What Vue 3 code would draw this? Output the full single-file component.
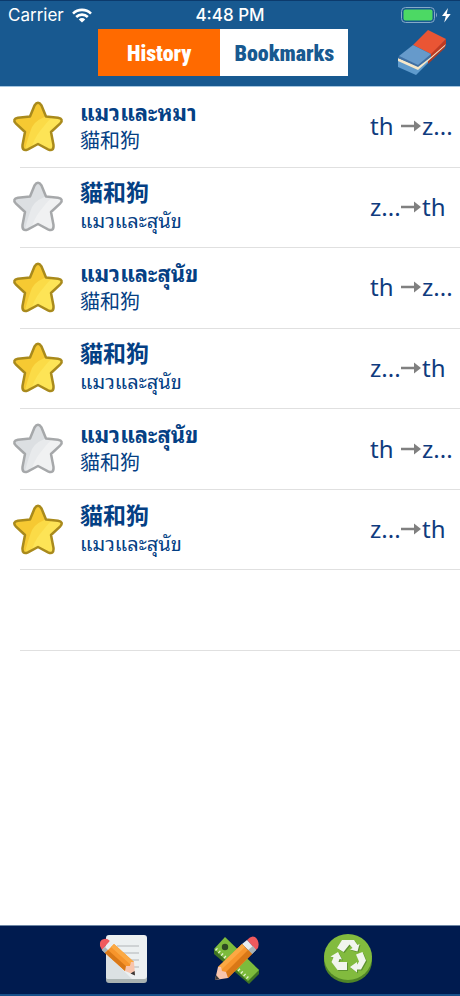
<template>
    <div class="app">
        <header class="top">
            <div class="status">
                <div class="carrier">
                    <span>Carrier</span>
                    <svg width="20" height="15" viewBox="0 0 20 15" aria-hidden="true">
                        <g fill="none" stroke="#fff" stroke-width="2.6">
                            <path d="M1 5.6a12.8 12.8 0 0 1 18 0" />
                            <path d="M4.2 9a8.3 8.3 0 0 1 11.6 0" />
                        </g>
                        <path d="M10 14.6 6.8 11.4a4.6 4.6 0 0 1 6.4 0z" fill="#fff" />
                    </svg>
                </div>
                <span class="time">4:48 PM</span>
                <svg class="battery" width="52" height="18" viewBox="0 0 52 18" aria-hidden="true">
                    <rect x="1.5" y="1.5" width="33" height="15" rx="4" fill="none" stroke="#86a9c8" />
                    <rect x="3.5" y="3.5" width="29" height="11" rx="2" fill="#4cd964" />
                    <path d="M36 6.5q2 2.5 0 5z" fill="#86a9c8" />
                    <path d="M48 2 42 10h3.8l-1.6 6.5 6.5-8.4h-4z" fill="#fff" />
                </svg>
            </div>
            <div class="toolbar">
                <div class="tabs">
                    <button type="button" class="tab" :class="{ active: tab === 'history' }"
                        @click="tab = 'history'">History</button>
                    <button type="button" class="tab" :class="{ active: tab === 'bookmarks' }"
                        @click="tab = 'bookmarks'">Bookmarks</button>
                </div>
                <button type="button" class="icon-button" aria-label="Clear history" @click="entries = []">
                    <svg width="52" height="48" viewBox="0 0 52 48">
                        <path d="M1 31 21 39 31 30 31 34 19 46 1 38z" fill="#5f9bcd" />
                        <path d="M31 30 49 15 48 19 31 35z" fill="#a83b28" />
                        <path d="M1 29 21 37 49 14 48 17 21 41 1 32z" fill="#f6e8c9" />
                        <path d="M2 27 21 35 34 24 34 28 21 38 1 29z" fill="#3f6fa3" />
                        <path d="M34 24 49 10 49 15 34 28z" fill="#bf3a22" />
                        <path d="M16 16 31 1 49 10 34 25z" fill="#ea5534" />
                        <path d="M16 16 34 25 21 36 2 27z" fill="#669acb" />
                    </svg>
                </button>
            </div>
        </header>

        <main class="content">
            <ul class="entries">
                <li v-for="(entry, i) in entries" :key="i" class="entry">
                    <button type="button" class="star" :class="{ on: entry.starred }" :aria-pressed="entry.starred"
                        aria-label="Bookmark" @click="entry.starred = !entry.starred">
                        <svg width="52" height="52" viewBox="0 0 52 52">
                            <defs>
                                <clipPath :id="'star' + i">
                                    <path :d="starPath" />
                                </clipPath>
                            </defs>
                            <g :clip-path="`url(#star${i})`">
                                <path class="shade" d="M0 0h52v52H0z" />
                                <path class="light" d="M52 14H38Q24 18 20 26 16 36 12 52H52z" />
                                <path class="glow" d="M52 14H42Q34 22 28 30 21 39 18 52H52z" />
                            </g>
                            <path class="outline" :d="starPath" />
                        </svg>
                    </button>
                    <div class="words">
                        <strong class="source" :class="{ thai: entry.from === 'th' }">{{ entry.source }}</strong>
                        <span class="target">{{ entry.target }}</span>
                    </div>
                    <div class="direction">
                        <span>{{ entry.from }}</span>
                        <svg width="20" height="14" viewBox="0 0 20 14" aria-hidden="true">
                            <path d="M0 5.8h13V1.5l7 5.5-7 5.5V8.2H0z" fill="#808080" />
                        </svg>
                        <span>{{ entry.to }}</span>
                    </div>
                </li>
                <li class="entry"></li>
            </ul>
        </main>

        <nav class="bottom">
            <button type="button" class="icon-button" aria-label="Write">
                <svg width="50" height="50" viewBox="0 0 50 50">
                    <rect x="7" y="5" width="41" height="44" rx="3" fill="#a9b2b1" />
                    <rect x="7" y="1" width="41" height="44" rx="3" fill="#ecf0f1" />
                    <path d="M18 12h22M24 19h16M28 26h12M34 33h6" stroke="#c3c8ca" stroke-width="1.5" />
                    <path d="M7 19 33 45H10q-3 0-3-2z" fill="#dbe1e3" />
                    <path d="M1 12Q0 6 5 5 8 4 11 7L3 16z" fill="#f05a5d" />
                    <path d="M3 16 11 7 15 10 6 19z" fill="#e9edef" />
                    <path d="M3 16 6 13 9 16 6 19z" fill="#aab3b6" />
                    <path d="M6 19 15 10 35 28 26 37z" fill="#f7952c" />
                    <path d="M6 19 9 16 29 34 26 37z" fill="#d97817" />
                    <path d="M12 13 15 10 35 28 32 31z" fill="#fba944" />
                    <path d="M26 37 27 32 31 32 32 28 35 28 36 41z" fill="#f8c5ad" />
                    <path d="M31.5 39.5 35.6 37 36 41.5z" fill="#3a3736" />
                </svg>
            </button>
            <button type="button" class="icon-button" aria-label="Draw">
                <svg width="50" height="50" viewBox="0 0 50 50">
                    <path d="M3 16 15 5 48 36 48 40 38 50 3 20z" fill="#3f7423" />
                    <path d="M3 15 14 3 48 36 37 47z" fill="#7dbb3c" />
                    <circle cx="14" cy="13" r="3.2" fill="#2e4a22" />
                    <path d="M5 15 38 45" stroke="#e6f3d3" stroke-width="3" stroke-dasharray="1.3 2.5" />
                    <path d="M36 6Q40 1 44 3 49 7 47 14L45 16z" fill="#f05a5d" />
                    <path d="M36 6 45 16 41 20 31 10z" fill="#e9edef" />
                    <path d="M42 12 45 16 41 20 37 16z" fill="#aab3b6" />
                    <path d="M31 10 41 20 17 44 7 33z" fill="#f7952c" />
                    <path d="M37 16 41 20 17 44 13 40z" fill="#d97817" />
                    <path d="M31 10 34 13 10 36 7 33z" fill="#fba944" />
                    <path d="M7 33 10 33 11 37 15 38 17 44 4 46z" fill="#f8c5ad" />
                    <path d="M5 41 8.5 45 4 46z" fill="#3a3736" />
                </svg>
            </button>
            <button type="button" class="icon-button" aria-label="Recycle">
                <svg width="50" height="50" viewBox="0 0 50 50">
                    <path d="M1 24V27a24 22 0 0 0 48 0V24z" fill="#4f8527" />
                    <ellipse cx="25" cy="23" rx="24" ry="23" fill="#82bb3e" />
                    <path fill="#5d9130" transform="translate(1 1)" :d="recyclePath" />
                    <path fill="#f1f5ee" :d="recyclePath" />
                </svg>
            </button>
        </nav>
    </div>
</template>

<script setup>
import { ref } from 'vue';

const tab = ref('history')

const starPath = 'M22.5 4.5Q26 -1 29.5 4.5L34 15.5 46 16.7Q52 18 48.3 22.3L39 31 41.5 44Q42 51 36 48.3L26 43 16 48.3Q10 51 10.5 44L13 31 3.7 22.3Q0 18 6 16.7L18 15.5Z'

// top, right and left arrows
const recyclePath = 'M19 6H31L34.5 11 36.5 10 34.5 17.5 27 15.5 29.5 14 26.5 10.5 20.5 18 14 14Z'
    + 'M33 20.5 39.5 18 43 26.500 38 35.5H34V38.5L27 33 34 28V30.5L36 27.5Z'
    + 'M24 36H14.5L8.5 28 10.5 23.5 7.5 22.5 15 18 19 25.5 16.5 25 15.5 28H24Z'

const entries = ref([
    { source: 'แมวและหมา', target: '貓和狗', from: 'th', to: 'z...', starred: true },
    { source: '貓和狗', target: 'แมวและสุนัข', from: 'z...', to: 'th', starred: false },
    { source: 'แมวและสุนัข', target: '貓和狗', from: 'th', to: 'z...', starred: true },
    { source: '貓和狗', target: 'แมวและสุนัข', from: 'z...', to: 'th', starred: true },
    { source: 'แมวและสุนัข', target: '貓和狗', from: 'th', to: 'z...', starred: false },
    { source: '貓和狗', target: 'แมวและสุนัข', from: 'z...', to: 'th', starred: true },
])
</script>

<style>
body {
    margin: 0;
    background: #fff;
}
</style>

<style scoped>
.app {
    min-height: 100vh;
    display: flex;
    flex-direction: column;
    font-family: "Noto Sans", "Noto Sans Thai Looped", Loma, Garuda, Waree, "Noto Sans CJK TC", sans-serif;
}

button {
    border: 0;
    padding: 0;
    background: none;
    font: inherit;
    cursor: pointer;
}

svg {
    display: block;
}

.top {
    background: #185990;
    border-top: 1px solid #0c3a6c;
    border-bottom: 1px solid #a5c6e0;
    color: #fff;
}

.status {
    display: grid;
    grid-template-columns: 1fr auto 1fr;
    align-items: center;
    height: 28px;
    padding: 0 8px;
    font-family: Inter, sans-serif;
    font-size: 17px;
}

.carrier {
    display: flex;
    align-items: center;
    gap: 8px;
}

.time {
    font-weight: 500;
}

.battery {
    justify-self: end;
}

/* Tabs sit in the middle, the eraser on the right */
.toolbar {
    display: flex;
    justify-content: space-between;
    padding: 0 11px 9px 98px;
}

.tabs {
    display: flex;
    height: 47px;
}

.tab {
    padding: 2px 14px 0;
    background: #fff;
    color: #185990;
    font-family: "Liberation Sans Narrow", "Roboto Condensed", Roboto, sans-serif;
    font-size: 22px;
    font-weight: 900;
}

.tab:first-child {
    padding: 2px 29px 0;
}

.tab.active {
    background: #ff6a00;
    color: #fff;
}

.content {
    flex: 1;
}

.entries {
    display: grid;
    grid-auto-rows: 1fr;
    min-height: 564px;
    margin: 0;
    padding: 0;
    list-style: none;
}

.entry {
    display: flex;
    align-items: center;
    margin-left: 20px;
    border-bottom: 1px solid #e0e0e0;
    color: #044084;
}

.star {
    margin-left: -8px;
}

.shade {
    fill: #dcdfe2;
}

.light {
    fill: #e8eaec;
}

.glow {
    fill: #f0f1f2;
}

.outline {
    fill: none;
    stroke: #a6a8aa;
    stroke-width: 2.5;
    stroke-linejoin: round;
}

.on .shade {
    fill: #f6c932;
}

.on .light {
    fill: #fbdb47;
}

.on .glow {
    fill: #fde456;
}

.on .outline {
    stroke: #a98a1c;
}

.words {
    flex: 1;
    display: flex;
    flex-direction: column;
    margin-left: 16px;
    padding-bottom: 2px;
}

.source {
    font-size: 23px;
    line-height: 30px;
}

.source.thai {
    font-size: 22px;
}

.target {
    font-size: 20px;
    line-height: 28px;
}

.direction {
    display: grid;
    grid-template-columns: 30px 20px 38px;
    align-items: center;
    column-gap: 1px;
    padding-bottom: 1px;
    font-size: 24px;
    line-height: 34px;
    color: #0f3b7e;
}

.bottom {
    display: flex;
    justify-content: center;
    align-items: center;
    gap: 62px;
    height: 66px;
    padding: 0 0 2px 12px;
    background: #001b4f;
    border-top: 1px solid #6d86a4;
    border-bottom: 2px solid #16508a;
}
</style>
